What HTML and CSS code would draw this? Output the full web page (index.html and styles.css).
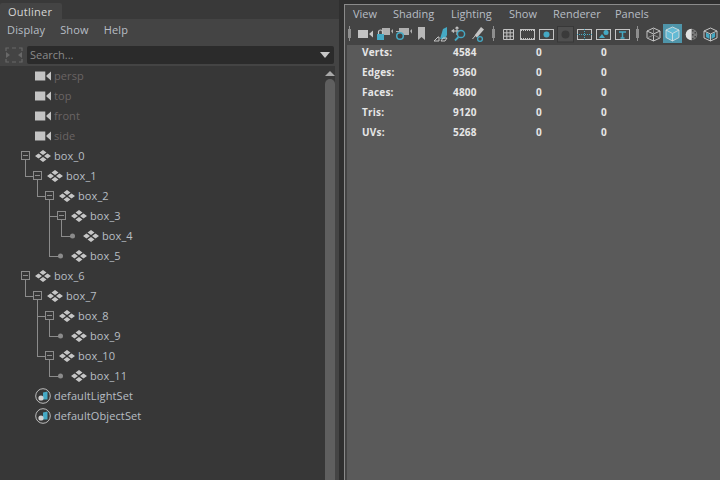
FILE: index.html
```html
<!DOCTYPE html>
<html lang="en">
<head>
<meta charset="utf-8">
<title>Outliner</title>
<link rel="stylesheet" href="styles.css">
</head>
<body>
<svg class="defs" width="0" height="0" aria-hidden="true">
  <symbol id="cam" viewBox="0 0 14 10"><path fill="#c4c4c4" d="M0 1h9v8H0zM10 4.500 14 1v8l-4-3.500z"/></symbol>
  <symbol id="diamond" viewBox="0 0 16 12"><path fill="#c6c6c6" d="M8 0l3.500 2.500L8 5 4.500 2.500zM3.500 3.500 7 6 3.500 8.500 0 6zM12.500 3.500 16 6l-3.500 2.500L9 6zM8 7l3.500 2.500L8 12 4.500 9.500z"/></symbol>
  <symbol id="set" viewBox="0 0 16 16"><circle cx="8" cy="8" r="7.300" fill="none" stroke="#bdbdbd" stroke-width="1"/><path fill="#45a9c4" d="M8 4.500l4.500-1v8H8z"/><circle cx="6" cy="10" r="2.600" fill="#d0d0d0"/></symbol>
</svg>
<div class="app">
  <section class="outliner">
    <div class="tabs"><div class="tab">Outliner</div></div>
    <nav class="menu menu-left"><span>Display</span><span>Show</span><span>Help</span></nav>
    <div class="searchrow">
      <svg class="filter" width="18" height="16" viewBox="0 0 18 16"><path fill="none" stroke="#686868" stroke-width="1.200" d="M1 4V1h3M14 1h3v3M17 12v3h-3M4 15H1v-3M7 1h4M7 15h4"/><path fill="#686868" d="M1 5l4 3-4 3zM17 5l-4 3 4 3z"/></svg>
      <div class="search"><span>Search...</span><i class="caret"></i></div>
    </div>
    <div class="treewrap">
      <div class="tree">
        <svg class="lines" width="90" height="360" viewBox="0 0 90 360" aria-hidden="true">
          <g fill="none" stroke="#8b8b8b" stroke-width="1" transform="translate(0 -66)" shape-rendering="crispEdges">
            <path d="M25.500 160v16H33M37.500 180v16H45M49.500 200v56H60M49.500 216H57M61.500 220v16H72"/>
            <path d="M25.500 280v16H33M37.500 300v56H45M37.500 316H45M49.500 320v16H60M49.500 360v16H60"/>
            <g stroke="#8b8b8b">
              <rect x="21.500" y="151.500" width="8" height="8"/><rect x="33.500" y="171.500" width="8" height="8"/><rect x="45.500" y="191.500" width="8" height="8"/><rect x="57.500" y="211.500" width="8" height="8"/>
              <rect x="21.500" y="271.500" width="8" height="8"/><rect x="33.500" y="291.500" width="8" height="8"/><rect x="45.500" y="311.500" width="8" height="8"/><rect x="45.500" y="351.500" width="8" height="8"/>
              <path d="M23 155.500h5M35 175.500h5M47 195.500h5M59 215.500h5M23 275.500h5M35 295.500h5M47 315.500h5M47 355.500h5"/>
            </g>
            <g fill="#8b8b8b" stroke="none" shape-rendering="auto"><circle cx="72.500" cy="236" r="2.500"/><circle cx="60.500" cy="256" r="2.500"/><circle cx="60.500" cy="336" r="2.500"/><circle cx="60.500" cy="376" r="2.500"/></g>
          </g>
        </svg>
        <div class="row dim"><svg class="ico"><use href="#cam"/></svg><span>persp</span></div>
        <div class="row dim"><svg class="ico"><use href="#cam"/></svg><span>top</span></div>
        <div class="row dim"><svg class="ico"><use href="#cam"/></svg><span>front</span></div>
        <div class="row dim"><svg class="ico"><use href="#cam"/></svg><span>side</span></div>
        <div class="row"><svg class="ico"><use href="#diamond"/></svg><span>box_0</span></div>
        <div class="row d1"><svg class="ico"><use href="#diamond"/></svg><span>box_1</span></div>
        <div class="row d2"><svg class="ico"><use href="#diamond"/></svg><span>box_2</span></div>
        <div class="row d3"><svg class="ico"><use href="#diamond"/></svg><span>box_3</span></div>
        <div class="row d4"><svg class="ico"><use href="#diamond"/></svg><span>box_4</span></div>
        <div class="row d3"><svg class="ico"><use href="#diamond"/></svg><span>box_5</span></div>
        <div class="row"><svg class="ico"><use href="#diamond"/></svg><span>box_6</span></div>
        <div class="row d1"><svg class="ico"><use href="#diamond"/></svg><span>box_7</span></div>
        <div class="row d2"><svg class="ico"><use href="#diamond"/></svg><span>box_8</span></div>
        <div class="row d3"><svg class="ico"><use href="#diamond"/></svg><span>box_9</span></div>
        <div class="row d2"><svg class="ico"><use href="#diamond"/></svg><span>box_10</span></div>
        <div class="row d3"><svg class="ico"><use href="#diamond"/></svg><span>box_11</span></div>
        <div class="row"><svg class="ico"><use href="#set"/></svg><span>defaultLightSet</span></div>
        <div class="row"><svg class="ico"><use href="#set"/></svg><span>defaultObjectSet</span></div>
      </div>
      <div class="scroll"><i class="up"></i><div class="thumb"></div></div>
    </div>
  </section>
  <div class="split"></div>
  <section class="panel">
    <nav class="menu menu-right"><span>View</span><span>Shading</span><span>Lighting</span><span>Show</span><span>Renderer</span><span>Panels</span></nav>
    <div class="toolbar">
      <i class="sep sep-first"></i>
      <svg class="tool" viewBox="0 0 19 20"><path fill="#c4c4c4" d="M3 6h10v8H3zM14 10l4-3.500v7z"/></svg>
      <svg class="tool" viewBox="0 0 19 20"><path fill="#b0b0b0" d="M8 4h8v7H8zM17 7l3-3v7z"/><rect x="3" y="10" width="7" height="6" fill="#45a9c4"/><path fill="none" stroke="#c4c4c4" stroke-width="1.200" d="M4.500 10V8a2 2 0 0 1 4 0v2"/></svg>
      <svg class="tool" viewBox="0 0 19 20"><path fill="#b0b0b0" d="M6 4h10v7H6zM17 7l3-3v7z"/><circle cx="7" cy="12" r="3.300" fill="#3f3f3f" stroke="#45a9c4" stroke-width="1.500"/><path fill="#b0b0b0" d="M3 7h8v1H3z"/></svg>
      <svg class="tool" viewBox="0 0 19 20"><path fill="#b8b8b8" d="M6 3h7v13l-3.500-3L6 16z"/></svg>
      <svg class="tool" viewBox="0 0 19 20"><path fill="#45a9c4" d="M9 15 12 5l4-2v8l-2 4z"/><path fill="none" stroke="#c4c4c4" d="M3 17l4-4h1v4zM10 17l2-3h4l-2 3z"/></svg>
      <svg class="tool" viewBox="0 0 19 20"><path fill="none" stroke="#c4c4c4" stroke-width="1.100" d="M7 3v8M3 7h6M5.500 4.500 7 3l1.500 1.500M4 5.500 2 7l2 1.500"/><circle cx="11" cy="10" r="3.600" fill="none" stroke="#45a9c4" stroke-width="1.500"/><path stroke="#45a9c4" stroke-width="1.800" d="M8.500 13 5 16.500"/></svg>
      <svg class="tool" viewBox="0 0 19 20"><path fill="#c4c4c4" d="M12 3l3 2.500-7 8-2.500-2z"/><path fill="none" stroke="#c4c4c4" d="M6 12l-2.500 3"/><circle cx="11" cy="15" r="2.400" fill="none" stroke="#45a9c4" stroke-width="1.300"/></svg>
      <i class="sep"></i>
      <svg class="tool grid" viewBox="0 0 19 20"><path fill="none" stroke="#c4c4c4" d="M4.500 5.500h10v10h-10zM7.833 5.500v10M11.167 5.500v10M4.500 8.833h10M4.500 12.167h10"/></svg>
      <svg class="tool" viewBox="0 0 19 20" shape-rendering="crispEdges"><path fill="none" stroke="#c4c4c4" d="M2.500 5.500h14v10h-14z"/><path stroke="#c4c4c4" stroke-dasharray="1 1" fill="none" d="M3 6.500h13M3 14.500h13"/></svg>
      <svg class="tool" viewBox="0 0 19 20"><rect x="2.500" y="5.500" width="14" height="10" fill="none" stroke="#c4c4c4"/><circle cx="9.500" cy="10.500" r="3" fill="#45a9c4"/></svg>
      <svg class="tool" viewBox="0 0 19 20"><rect x="1.500" y="2.500" width="16" height="15.500" fill="#4f4f4f" stroke="#383838"/><circle cx="9.500" cy="10.500" r="4" fill="#3a3a3a"/></svg>
      <svg class="tool" viewBox="0 0 19 20"><rect x="2.500" y="5.500" width="14" height="10" fill="none" stroke="#c4c4c4"/><path fill="none" stroke="#45a9c4" stroke-dasharray="1 1" d="M2 10.500h15M9.500 5v11"/></svg>
      <svg class="tool" viewBox="0 0 19 20"><rect x="2.500" y="5.500" width="14" height="10" fill="none" stroke="#c4c4c4"/><circle cx="12" cy="8.500" r="2.500" fill="#45a9c4"/><path fill="#45a9c4" d="M5 14l3-4 3 4z"/></svg>
      <svg class="tool" viewBox="0 0 19 20"><rect x="2.500" y="5.500" width="14" height="10" fill="none" stroke="#c4c4c4"/><path fill="none" stroke="#45a9c4" stroke-width="1.500" d="M6 8h7M9.500 7.500V14M7.500 14h4"/></svg>
      <i class="sep sep-wide"></i>
      <svg class="tool" viewBox="0 0 19 20"><path fill="none" stroke="#c4c4c4" d="M9.500 4 16 7v7l-6.500 3L3 14V7zM3 7l6.500 3L16 7M9.500 10v7"/><path fill="none" stroke="#8a8a8a" d="M3 14l6.500-3 6.500 3M9.500 4v6"/></svg>
      <svg class="tool" viewBox="0 0 19 20"><rect width="19" height="19" y="0" fill="#4f95aa"/><path fill="#63bad4" stroke="#e2e2e2" stroke-width=".8" d="M9.500 3 16 6v7.500L9.500 17 3 13.500V6z"/><path fill="none" stroke="#e2e2e2" stroke-width=".8" d="M3 6l6.500 3.500L16 6M9.500 9.500V17"/></svg>
      <svg class="tool" viewBox="0 0 19 20"><circle cx="9.500" cy="10.500" r="5.800" fill="#7a7a7a"/><path fill="#e0e0e0" d="M9.500 4.700a5.800 5.800 0 0 0 0 11.600z"/><path fill="#454545" d="M10 6h1.500v1.500H10zM12.500 8H14v1.500h-1.500zM10 10h1.500v1.500H10zM12.500 12H14v1.500h-1.500zM10 14h1.500v1.500H10z"/></svg>
      <svg class="tool" viewBox="0 0 19 20"><path fill="none" stroke="#c4c4c4" d="M9.500 4 16 7v7l-6.500 3L3 14V7zM3 7l6.500 3L16 7M9.500 10v7"/><path fill="#45a9c4" d="M5 8.500l3.500 2v4.500l-3.500-2zM14 8.500l-3.500 2v4.500l3.500-2z"/></svg>
    </div>
    <div class="view">
      <div class="stats">
        <span>Verts:</span><span>4584</span><span>0</span><span>0</span>
        <span>Edges:</span><span>9360</span><span>0</span><span>0</span>
        <span>Faces:</span><span>4800</span><span>0</span><span>0</span>
        <span>Tris:</span><span>9120</span><span>0</span><span>0</span>
        <span>UVs:</span><span>5268</span><span>0</span><span>0</span>
      </div>
    </div>
  </section>
</div>
</body>
</html>
```
FILE: styles.css
```css
* { box-sizing: border-box; }
html, body { margin: 0; height: 100%; overflow: hidden; background: #373737; }
body { font: 11px/14px "Open Sans", "Liberation Sans", sans-serif; color: #c6c6c6; }
.defs { position: absolute; }
.app { display: flex; width: 720px; height: 480px; }

.outliner { width: 339px; display: flex; flex-direction: column; background: #444; }
.tabs { height: 19px; padding-top: 3px; background: #393939; display: flex; }
.tab { width: 62px; height: 16px; padding-left: 8px; background: #444; color: #d6d6d6; line-height: 17px; letter-spacing: .25px; border-radius: 2px 2px 0 0; }
.menu { display: flex; color: #b8bec4; }
.menu-left { height: 21px; align-items: center; padding-left: 7px; gap: 15px; letter-spacing: .15px; }
.searchrow { height: 26px; display: flex; align-items: center; padding: 4px 5px 0 5px; gap: 4px; }
.filter { flex: none; }
.search { flex: 1; height: 18px; background: #2b2b2b; border-radius: 2px; display: flex; align-items: center; justify-content: space-between; padding: 0 4px 0 3px; color: #8a8a8a; }
.caret { width: 0; height: 0; border-left: 5px solid transparent; border-right: 5px solid transparent; border-top: 6px solid #c8c8c8; }

.treewrap { flex: 1; display: flex; }
.tree { flex: none; width: 325px; position: relative; background: #373737; }
.lines { position: absolute; left: 0; top: 0; }
.row { height: 20px; display: flex; align-items: center; padding-left: 35px; color: #b8bec4; letter-spacing: .1px; }
.row .ico { width: 16px; height: 16px; margin-right: 3px; flex: none; }
.row span { display: block; }
.d1 { padding-left: 47px; }
.d2 { padding-left: 59px; }
.d3 { padding-left: 71px; }
.d4 { padding-left: 83px; }
.dim { color: #6a6464; }

.scroll { width: 10px; display: flex; flex-direction: column; align-items: center; background: #373737; }
.up { margin-top: 5px; width: 0; height: 0; border-left: 5px solid transparent; border-right: 5px solid transparent; border-bottom: 5px solid #a8a8a8; }
.thumb { width: 10px; flex: 1; margin-top: 3px; background: #5f5f5f; border-radius: 5px 5px 0 0; }

.split { width: 5px; background: #2f2f2f; }

.panel { flex: 1; display: flex; flex-direction: column; background: #444; border-left: 1px solid #8a8a8a; border-top: 1px solid #8a8a8a; margin-top: 4px; position: relative; }
.panel::before { content: ""; position: absolute; left: -6px; right: 0; top: -5px; height: 4px; background: #2f2f2f; }
.menu-right { height: 18px; padding: 0 0 0 8px; align-items: center; }
.menu-right span:nth-child(1) { width: 40px; }
.menu-right span:nth-child(2) { width: 58px; }
.menu-right span:nth-child(3) { width: 58px; }
.menu-right span:nth-child(4) { width: 44px; }
.menu-right span:nth-child(5) { width: 62px; }

.toolbar { height: 22px; padding-top: 1px; display: flex; align-items: flex-start; }
.tool { width: 19px; height: 20px; flex: none; }
.sep { flex: none; width: 10px; height: 15px; margin-top: 2px; background: linear-gradient(#8e8e8e,#8e8e8e) center/3px 9px no-repeat, linear-gradient(#8e8e8e,#8e8e8e) center/1px 15px no-repeat; }
.sep-first { width: 8px; margin-right: 2px; }
.sep-wide { margin-right: 2px; }
.grid { margin-left: 1px; }

.view { flex: 1; background: #5a5a5a; margin-left: 2px; }
.stats { display: grid; grid-template-columns: 91px 83px 65px auto; row-gap: 6px; padding-left: 15px; font: bold 10px/14px "Open Sans", "Liberation Sans", sans-serif; color: #e6e6e6; letter-spacing: .2px; }
```
